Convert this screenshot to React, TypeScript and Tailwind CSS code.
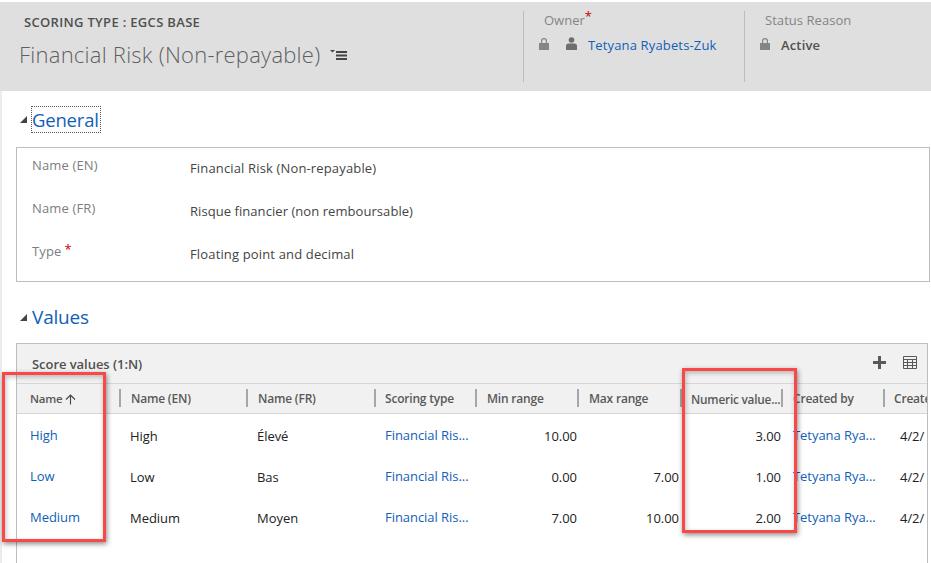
const font = { fontFamily: '"Open Sans", "Noto Sans", sans-serif' };

const Lock = () => (
  <svg width="10" height="12" viewBox="0 0 10 12">
    <path d="M0 5h10v7H0z M2 5V3a3 3 0 0 1 6 0v2H6.8V3a1.8 1.8 0 0 0-3.6 0v2z" fill="#858585" />
  </svg>
);

const Person = () => (
  <svg width="11" height="13" viewBox="0 0 11 13">
    <circle cx="5.5" cy="3" r="2.8" fill="#6e6e6e" />
    <path d="M0 13V9a2.5 2.5 0 0 1 2.5-2.5h6A2.5 2.5 0 0 1 11 9v4z" fill="#6e6e6e" />
  </svg>
);

const Tri = () => (
  <svg width="7" height="7" viewBox="0 0 7 7" className="shrink-0">
    <path d="M7 0v7H0z" fill="#444" />
  </svg>
);

const widths = ["w-[102px]", "w-[127px]", "w-[128px]", "w-[101px]", "w-[102px]", "w-[103px]", "w-[101px]", "w-[102px]", "w-[60px]"];
const heads = ["Name", "Name (EN)", "Name (FR)", "Scoring type", "Min range", "Max range", "Numeric value...", "Created by", "Create"];

const rows = [
  ["High", "High", "Élevé", "Financial Ris...", "10.00", "", "3.00", "Tetyana Rya...", "4/2/"],
  ["Low", "Low", "Bas", "Financial Ris...", "0.00", "7.00", "1.00", "Tetyana Rya...", "4/2/"],
  ["Medium", "Medium", "Moyen", "Financial Ris...", "7.00", "10.00", "2.00", "Tetyana Rya...", "4/2/"],
];

const Field = ({ label, value, star, cls, tight }: { label: string; value: string; star?: boolean; cls: string; tight?: boolean }) => (
  <div className={`flex h-[18px] leading-[18px] ${cls}`}>
    <div className="-mt-[3px] w-[158px] text-[13px] tracking-[0.15px] text-[#7d7d7d]">
      {label}
      {star && <span className="relative -top-[2px] ml-[3px] text-[#c00000]">*</span>}
    </div>
    <div className={`text-[13px] text-[#444444] ${tight ? "tracking-[0.06px]" : "tracking-[0.15px]"}`}>{value}</div>
  </div>
);

export default function App() {
  return (
    <div className="relative h-[563px] w-[931px] overflow-hidden bg-white pt-[2px]" style={font}>
      <header className="flex h-[89px] bg-[#dfdfdf]">
        <div className="w-[523px] pl-[19px] pt-[11px]">
          <div className="pl-[5px] text-[13px] font-semibold leading-[18px] tracking-[0.32px] text-[#505050]">SCORING TYPE : EGCS BASE</div>
          <div className="mt-[8px] flex items-center">
            <span className="text-[22px] font-light leading-[30px] tracking-[0.24px] text-[#5f5f5f]">Financial Risk (Non-repayable)</span>
            <span className="ml-[10px] mt-[3px] flex">
              <svg width="18" height="11" viewBox="0 0 18 11">
                <path d="M0 0h5L2.5 2.5z" fill="#444" />
                <path d="M6 1h11v2H6zM6 4.5h11v2H6zM6 8h11v2H6z" fill="#444" />
              </svg>
            </span>
          </div>
        </div>
        <div className="mt-[9px] h-[71px] w-[221px] border-l border-[#bdbdbd] pl-[20px]">
          <div className="text-[13px] leading-[18px] tracking-[0px] text-[#858585]">
            Owner<span className="relative -top-[4px] text-[#c00000]">*</span>
          </div>
          <div className="mt-[7px] flex items-center">
            <span className="-ml-[5px] -mt-[3px] flex w-[27px]"><Lock /></span>
            <span className="-mt-[3px] flex"><Person /></span>
            <span className="ml-[11px] text-[13px] leading-[18px] tracking-[0.15px] text-[#1160b7]">Tetyana Ryabets-Zuk</span>
          </div>
        </div>
        <div className="mt-[9px] h-[71px] flex-1 border-l border-[#bdbdbd] pl-[20px]">
          <div className="text-[13px] leading-[18px] tracking-[0.05px] text-[#858585]">Status Reason</div>
          <div className="mt-[7px] flex items-center">
            <span className="-ml-[5px] -mt-[3px] flex w-[21px]"><Lock /></span>
            <span className="text-[13px] font-semibold leading-[18px] tracking-[0.15px] text-[#505050]">Active</span>
          </div>
        </div>
      </header>

      <main className="h-[472px] border-l-2 border-[#ececec] pl-[14px]">
        <div className="pt-[15px]">
          <div className="flex items-center gap-[4px] pl-[4px]">
            <Tri />
            <span className="border border-dotted border-[#555] pr-[1px] text-[18.5px] leading-[25px] tracking-[-0.2px] text-[#1160b7]">General</span>
          </div>
        </div>
        <section className="mt-[14px] h-[135px] w-[914px] border border-[#bdbdbd] pl-[15px] pt-[11px]">
          <Field label="Name (EN)" value="Financial Risk (Non-repayable)" cls="" />
          <Field label="Name (FR)" value="Risque financier (non remboursable)" cls="mt-[25px]" tight />
          <Field label="Type" value="Floating point and decimal" star cls="mt-[25px]" />
        </section>

        <div className="mt-[23px] flex items-center gap-[5px] pl-[4px]">
          <Tri />
          <span className="text-[19px] leading-[25px] tracking-[-0.2px] text-[#1160b7]">Values</span>
        </div>

        <section className="mt-[13px] h-[300px] w-[912px] overflow-hidden border-l border-r border-t border-[#bdbdbd]">
          <div className="flex h-[40px] items-center justify-between border-b border-[#d6d6d6] bg-[#f1f1f1] pl-[15px] pr-[10px]">
            <span className="pt-[3px] text-[13px] font-semibold tracking-[-0.05px] text-[#505050]">Score values (1:N)</span>
            <span className="-mt-[3px] flex items-center gap-[17px]">
              <svg width="13" height="13" viewBox="0 0 13 13"><path d="M5 0h3v5h5v3H8v5H5V8H0V5h5z" fill="#595959" /></svg>
              <svg width="14" height="13" viewBox="0 0 14 13" fill="none" stroke="#595959"><path d="M.5.5h13v12H.5zM.5 3.5h13M.5 6.5h13M.5 9.5h13M4.5 3.5v9M9.5 3.5v9" /></svg>
            </span>
          </div>
          <div className="flex h-[30px] items-center border-b border-[#d6d6d6] bg-[#f1f1f1]">
            {heads.map((h, i) => (
              <div key={h} className={`${widths[i]} shrink-0 ${i === 0 ? "pl-[13px]" : i === 3 || i === 6 || i === 8 ? "pl-[11px]" : "pl-[12px]"} relative whitespace-nowrap ${i === 0 ? "text-[11.5px]" : i === 6 ? "text-[11.8px]" : "text-[12px]"} font-semibold leading-[20px] tracking-[-0.2px] text-[#595959]`}>
                {i > 0 && <span className="absolute left-0 top-0 h-[18px] w-[2px] bg-[#a6a6a6]" />}
                {h}
                {i === 0 && (
                  <svg width="11" height="11" viewBox="0 0 11 11" fill="none" stroke="#444" strokeWidth="1.1" className="ml-[3px] inline-block">
                    <path d="M5.5 10.5V1M1 5.5l4.5-4.5 4.5 4.5" />
                  </svg>
                )}
              </div>
            ))}
          </div>
          <div className="pt-[2px]">
            {rows.map((r) => (
              <div key={r[0]} className="flex h-[41px] items-center text-[13px] tracking-[-0.05px]">
                {r.map((c, i) => {
                  const link = i === 0 || i === 3 || i === 7;
                  const num = i >= 4 && i <= 6;
                  return (
                    <div
                      key={i}
                      className={`${widths[i]} shrink-0 overflow-hidden whitespace-nowrap ${
                        i === 0 ? "pl-[13px]" : i === 8 ? "pl-[17px]" : num ? "" : i === 7 ? "pl-[12px]" : "pl-[11px]"
                      } ${num ? (i === 5 ? "pr-[1px] text-right" : "text-right") : ""} ${link ? "-mt-[2px] text-[#1160b7]" : "text-[#222222]"}`}
                    >
                      {c}
                    </div>
                  );
                })}
              </div>
            ))}
          </div>
        </section>
      </main>

      <div className="absolute left-[2px] top-[372px] h-[170px] w-[104px] border-[3px] border-[#f94848] shadow-[1px_2px_5px_rgba(0,0,0,0.45),inset_1px_2px_5px_rgba(0,0,0,0.25)]" />
      <div className="absolute left-[682px] top-[368px] h-[165px] w-[115px] border-[3px] border-[#f94848] shadow-[1px_2px_5px_rgba(0,0,0,0.45),inset_1px_2px_5px_rgba(0,0,0,0.25)]" />
    </div>
  );
}
